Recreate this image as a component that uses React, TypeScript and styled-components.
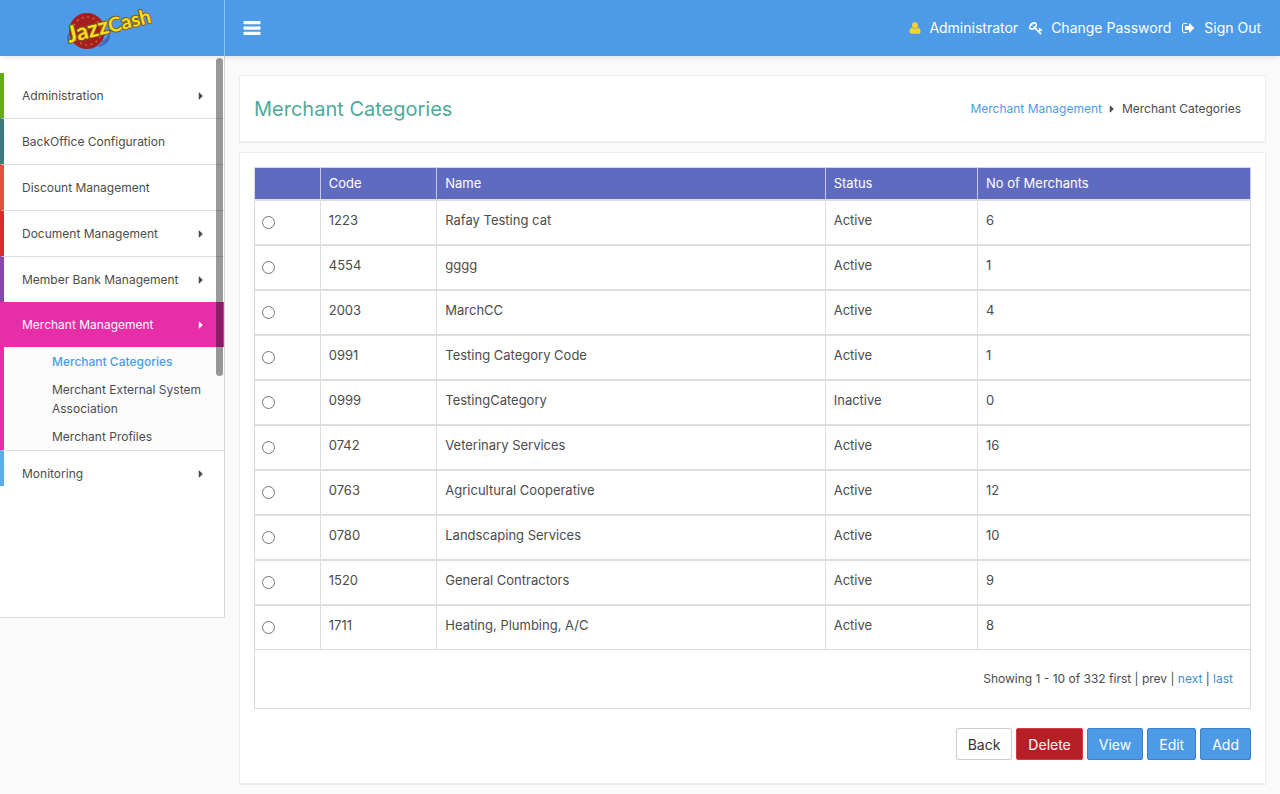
import React from "react";
import styled, { createGlobalStyle } from "styled-components";
import { FaCaretRight } from "react-icons/fa";

const Global = createGlobalStyle`
  * { box-sizing: border-box; }
  body {
    margin: 0;
    background: #fafafa;
    color: #4c4c4c;
    font-family: Inter, "Open Sans", sans-serif;
    font-size: 13px;
    line-height: 20px;
  }
  a { color: #4d9be6; text-decoration: none; }
  button, input { font-family: inherit; }
`;

const Header = styled.header`
  position: relative;
  z-index: 1;
  display: flex;
  height: 56px;
  background: #4d9be6;
  box-shadow: 0 1px 6px rgba(0, 0, 0, 0.12);
`;

const Brand = styled.a`
  display: flex;
  width: 225px;
  padding-left: 64px;
  border-right: 1px solid #8ebff0;
`;

const TopBar = styled.div`
  flex: 1;
  display: flex;
  align-items: center;
  justify-content: space-between;
  padding: 0 19px 0 18px;
`;

const MenuButton = styled.button`
  display: flex;
  padding: 0;
  border: 0;
  background: none;
  cursor: pointer;
`;

const UserNav = styled.nav`
  display: flex;
  gap: 11px;
`;

const UserLink = styled.a`
  display: flex;
  align-items: center;
  gap: 8px;
  color: #fff;
  font-size: 14px;
`;

const Body = styled.div`
  display: flex;
  align-items: flex-start;
`;

const Sidebar = styled.aside`
  position: relative;
  flex: 0 0 225px;
  min-height: 562px;
  padding-top: 17px;
  background: #fff;
  border: solid #d8d8d8;
  border-width: 0 1px 1px 0;
  font-size: 12px;
`;

const ScrollThumb = styled.div`
  position: absolute;
  top: 2px;
  right: 1px;
  width: 7px;
  height: 318px;
  border-radius: 4px;
  background: rgba(0, 0, 0, 0.4);
`;

const MenuList = styled.ul`
  margin: 0;
  padding: 0;
  list-style: none;
`;

const MenuItem = styled.li<{ $accent: string; $active: boolean }>`
  border-left: 4px solid ${(p) => p.$accent};
  &:not(:first-child) { border-top: 1px solid ${(p) => (p.$active ? p.$accent : "#dedede")}; }
  &:last-child { height: 36px; }
`;

const MenuLink = styled.a<{ $active: boolean }>`
  display: flex;
  align-items: center;
  justify-content: space-between;
  height: ${(p) => (p.$active ? 44 : 45)}px;
  padding: 0 17px 0 18px;
  color: ${(p) => (p.$active ? "#fff" : "#4c4c4c")};
  background: ${(p) => (p.$active ? "#e62ea9" : "transparent")};
`;

const SubMenu = styled(MenuList)`
  padding: 0 16px 0 48px;
  background: #fcfcfc;
`;

const SubLink = styled.a<{ $active: boolean }>`
  display: block;
  padding: 5px 0 4px;
  line-height: 19px;
  color: ${(p) => (p.$active ? "#4d9be6" : "#4c4c4c")};
  font-weight: ${(p) => (p.$active ? 500 : 400)};
`;

const Main = styled.main`
  flex: 1;
  min-width: 0;
  display: flex;
  flex-direction: column;
  gap: 9px;
  padding: 19px 14px 8px;
`;

const Card = styled.section`
  padding: 14px;
  background: #fff;
  border: 1px solid #ececec;
  border-bottom-width: 2px;
`;

const TitleCard = styled(Card)`
  display: flex;
  align-items: center;
  justify-content: space-between;
  height: 68px;
  padding-right: 24px;
`;

const Title = styled.h1`
  margin: 0;
  color: #4dab9a;
  font-size: 20px;
  line-height: 28px;
  font-weight: 400;
`;

const Crumbs = styled.nav`
  display: flex;
  align-items: center;
  gap: 4px;
  font-size: 12px;
`;

const Table = styled.table`
  width: 100%;
  table-layout: fixed;
  border-collapse: collapse;
  border: 1px solid #d8d8d8;
`;

const Th = styled.th<{ $width?: string }>`
  width: ${(p) => p.$width ?? "auto"};
  height: 32px;
  padding: 0 8px;
  background: #5f6bc1;
  border-right: 1px solid #c5c9e8;
  color: #fff;
  font-weight: 400;
  text-align: left;
`;

const Td = styled.td`
  height: 45px;
  padding: 9px 8px;
  vertical-align: top;
  border-top: 2px solid #dedede;
  border-right: 1px solid #dedede;
`;

const RadioCell = styled(Td)`
  padding-left: 7px;
`;

const PagerCell = styled.td`
  height: 59px;
  padding: 0 17px;
  border-top: 1px solid #d8d8d8;
  font-size: 12px;
  text-align: right;
  a { color: #3d8fd0; }
`;

const Radio = styled.input`
  appearance: none;
  display: block;
  width: 13px;
  height: 13px;
  margin: 6px 0 0;
  border: 1px solid #767676;
  border-radius: 50%;
  background: #fff;
  &:checked { box-shadow: inset 0 0 0 2px #fff; background: #4d9be6; }
`;

const Actions = styled.div`
  display: flex;
  justify-content: flex-end;
  gap: 4px;
  padding: 19px 0 9px;
`;

const tones = {
  plain: { bg: "#fff", line: "#cccccc", ink: "#333" },
  danger: { bg: "#b52024", line: "#d23c3c", ink: "#fff" },
  primary: { bg: "#4d9be6", line: "#3a83ca", ink: "#fff" },
};

const Button = styled.button<{ $tone: keyof typeof tones }>`
  height: 32px;
  padding: 0 11px;
  border: 1px solid ${(p) => tones[p.$tone].line};
  border-radius: 2px;
  background: ${(p) => tones[p.$tone].bg};
  color: ${(p) => tones[p.$tone].ink};
  font-size: 14px;
  cursor: pointer;
`;

const Logo = () => (
  <svg width="112" height="56" viewBox="0 0 112 56" role="img" aria-label="Jazz Cash">
    <path d="M38 42q7-2 8-12M35 46q10-3 10-10M6 33q-4 5 0 8" fill="none" stroke="#4268b8" strokeWidth="2" />
    <circle cx="23" cy="31" r="18" fill="#a51f22" />
    <circle cx="23" cy="31" r="14" fill="none" stroke="#d97a25" strokeWidth="1.500" strokeDasharray="1.500 4" />
    <g
      fontFamily="Lato, sans-serif"
      fontWeight="700"
      fill="#ffdc1e"
      stroke="#7a5a1c"
      strokeWidth="2"
      strokeLinejoin="round"
      paintOrder="stroke"
    >
      <text x="5" y="43" fontSize="23" transform="rotate(-14 5 43)">Jazz</text>
      <text x="46" y="33" fontSize="20" transform="rotate(-14 46 33)">Cash</text>
    </g>
  </svg>
);

const BarsIcon = () => (
  <svg width="18" height="14" viewBox="0 0 18 14" fill="#fff" aria-hidden="true">
    <rect x="0.500" y="0" width="17" height="3.300" rx="0.800" />
    <rect x="0.500" y="5.400" width="17" height="3.300" rx="0.800" />
    <rect x="0.500" y="10.700" width="17" height="3.300" rx="0.800" />
  </svg>
);

const UserIcon = () => (
  <svg width="12" height="12" viewBox="0 0 12 12" fill="#f3d32f" aria-hidden="true">
    <path d="M3 5.500C.9 6 .4 8 .5 10c0 1.100.8 1.700 1.700 1.700h7.600c.9 0 1.700-.6 1.700-1.700.1-2-.4-4-2.500-4.500a4 4 0 0 1-6 0Z" />
    <circle cx="6" cy="3.200" r="3" />
  </svg>
);

const KeyIcon = () => (
  <svg width="14" height="14" viewBox="0 0 1792 1792" fill="currentColor" aria-hidden="true">
    <path d="M832 512q0-80-56-136t-136-56-136 56-56 136q0 42 19 83-41-19-83-19-80 0-136 56t-56 136 56 136 136 56 136-56 56-136q0-42-19-83 41 19 83 19 80 0 136-56t56-136zm851 704q0 17-49 66t-66 49q-9 0-28.500-16t-36.500-33-38.500-40-24.500-26l-96 96 220 220q28 28 28 68 0 42-39 81t-81 39q-40 0-68-28l-671-671q-176 131-365 131-163 0-265.500-102.500t-102.500-265.500q0-160 95-313t248-248 313-95q163 0 265.500 102.500t102.500 265.500q0 189-131 365l355 355 96-96q-3-3-26-24.500t-40-38.500-33-36.500-16-28.500q0-17 49-66t66-49q13 0 23 10 6 6 46 44.500t82 79.500 86.500 86 73 78 28.500 41z" />
  </svg>
);

const SignOutIcon = () => (
  <svg width="14" height="14" viewBox="0 0 1792 1792" fill="currentColor" aria-hidden="true">
    <path d="M640 1440q0 4 1 20t.5 26.500-3 23.500-10 19.500-20.500 6.500h-320q-119 0-203.500-84.500t-84.500-203.500v-704q0-119 84.500-203.500t203.500-84.500h320q13 0 22.500 9.500t9.500 22.500q0 4 1 20t.5 26.500-3 23.500-10 19.500-20.500 6.500h-320q-66 0-113 47t-47 113v704q0 66 47 113t113 47h312l11.500 1 11.500 3 8 5.500 7 9 2 13.500zm928-544q0 26-19 45l-544 544q-19 19-45 19t-45-19-19-45v-288h-448q-26 0-45-19t-19-45v-384q0-26 19-45t45-19h448v-288q0-26 19-45t45-19 45 19l544 544q19 19 19 45z" />
  </svg>
);

const menu = [
  { label: "Administration", accent: "#63ab1c", arrow: true },
  { label: "BackOffice Configuration", accent: "#3b7b80" },
  { label: "Discount Management", accent: "#e2513c" },
  { label: "Document Management", accent: "#dc2a2c", arrow: true },
  { label: "Member Bank Management", accent: "#8e44ad", arrow: true },
  {
    label: "Merchant Management",
    accent: "#e62ea9",
    arrow: true,
    children: ["Merchant Categories", "Merchant External System Association", "Merchant Profiles"],
  },
  { label: "Monitoring", accent: "#5aaeee", arrow: true },
];

const rows = [
  ["1223", "Rafay Testing cat", "Active", "6"],
  ["4554", "gggg", "Active", "1"],
  ["2003", "MarchCC", "Active", "4"],
  ["0991", "Testing Category Code", "Active", "1"],
  ["0999", "TestingCategory", "Inactive", "0"],
  ["0742", "Veterinary Services", "Active", "16"],
  ["0763", "Agricultural Cooperative", "Active", "12"],
  ["0780", "Landscaping Services", "Active", "10"],
  ["1520", "General Contractors", "Active", "9"],
  ["1711", "Heating, Plumbing, A/C", "Active", "8"],
];

export default function App() {
  return (
    <>
      <Global />
      <Header>
        <Brand href="#"><Logo /></Brand>
        <TopBar>
          <MenuButton aria-label="Toggle menu"><BarsIcon /></MenuButton>
          <UserNav>
            <UserLink href="#"><UserIcon />Administrator</UserLink>
            <UserLink href="#"><KeyIcon />Change Password</UserLink>
            <UserLink href="#"><SignOutIcon />Sign Out</UserLink>
          </UserNav>
        </TopBar>
      </Header>
      <Body>
        <Sidebar>
          <MenuList>
            {menu.map((m) => (
              <MenuItem key={m.label} $accent={m.accent} $active={!!m.children}>
                <MenuLink href="#" $active={!!m.children}>
                  {m.label}
                  {m.arrow && <FaCaretRight size={12} />}
                </MenuLink>
                {m.children && (
                  <SubMenu>
                    {m.children.map((c, i) => (
                      <li key={c}><SubLink href="#" $active={i === 0}>{c}</SubLink></li>
                    ))}
                  </SubMenu>
                )}
              </MenuItem>
            ))}
          </MenuList>
          <ScrollThumb />
        </Sidebar>
        <Main>
          <TitleCard>
            <Title>Merchant Categories</Title>
            <Crumbs aria-label="Breadcrumb">
              <a href="#">Merchant Management</a>
              <FaCaretRight size={12} />
              <span>Merchant Categories</span>
            </Crumbs>
          </TitleCard>
          <Card>
            <Table>
              <thead>
                <tr>
                  <Th $width="6.6%" aria-label="Select" />
                  <Th $width="11.7%">Code</Th>
                  <Th $width="39%">Name</Th>
                  <Th $width="15.3%">Status</Th>
                  <Th>No of Merchants</Th>
                </tr>
              </thead>
              <tbody>
                {rows.map((r) => (
                  <tr key={r[0]}>
                    <RadioCell><Radio type="radio" name="category" aria-label={r[1]} /></RadioCell>
                    {r.map((v, i) => <Td key={i}>{v}</Td>)}
                  </tr>
                ))}
                <tr>
                  <PagerCell colSpan={5}>
                    Showing 1 - 10 of 332 first | prev | <a href="#">next</a> | <a href="#">last</a>
                  </PagerCell>
                </tr>
              </tbody>
            </Table>
            <Actions>
              <Button $tone="plain">Back</Button>
              <Button $tone="danger">Delete</Button>
              <Button $tone="primary">View</Button>
              <Button $tone="primary">Edit</Button>
              <Button $tone="primary">Add</Button>
            </Actions>
          </Card>
        </Main>
      </Body>
    </>
  );
}
